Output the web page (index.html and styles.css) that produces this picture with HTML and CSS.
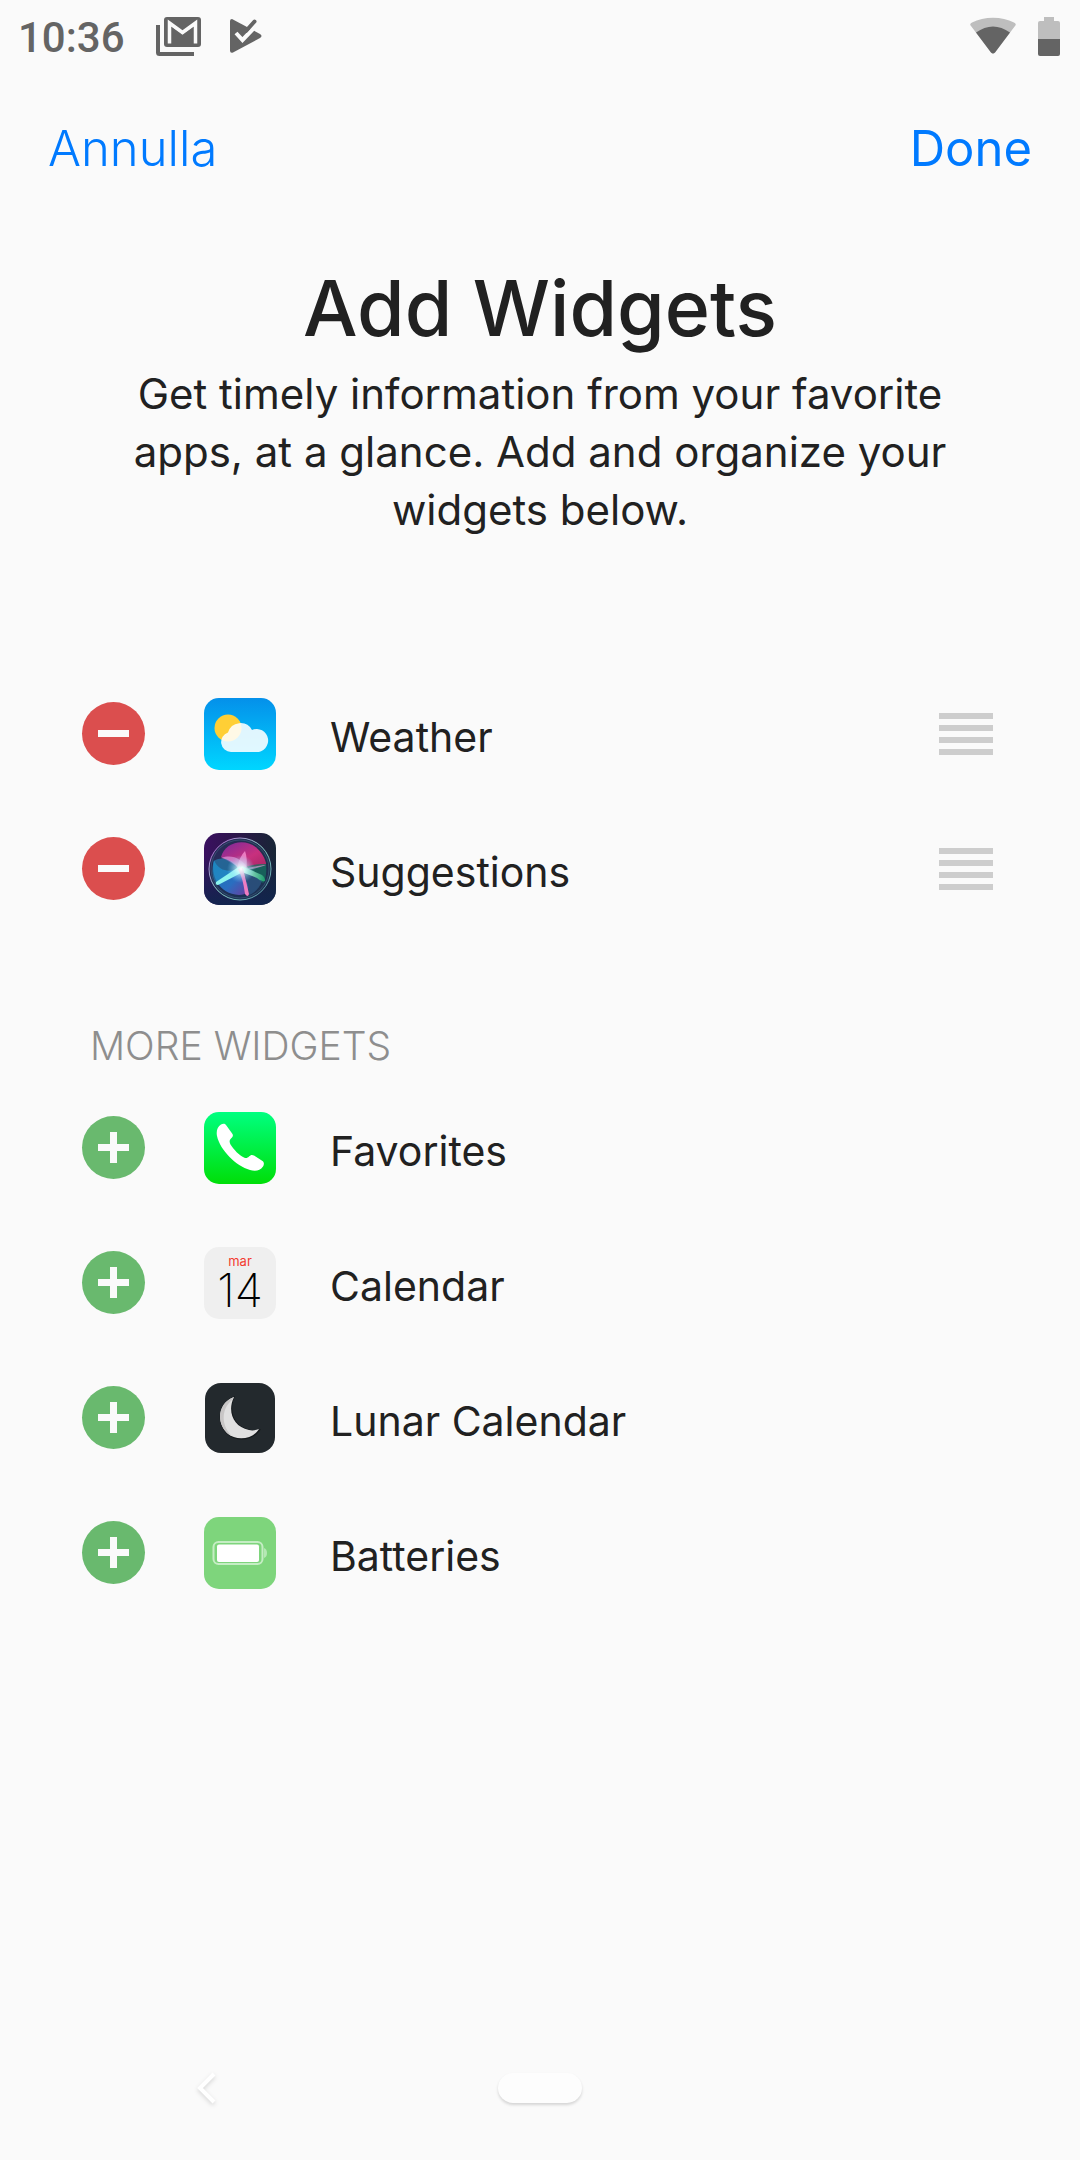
FILE: index.html
```html
<!DOCTYPE html>
<html lang="en">
<head>
  <meta charset="UTF-8">
  <meta name="viewport" content="width=device-width, initial-scale=1.0">
  <title>Add Widgets</title>
  <link rel="stylesheet" href="styles.css">
</head>
<body>

  <!-- Status bar -->
  <div class="status-bar">
    <span class="clock">10:36</span>
    <svg class="status-gmail" width="46" height="40" viewBox="0 0 46 40">
      <path d="M2 9v27.500a1.500 1.500 0 0 0 1.500 1.500H38" fill="none" stroke="#646464" stroke-width="4"/>
      <rect x="8" y="1" width="37" height="30" rx="3" fill="#646464"/>
      <path d="M13.500 27.500V7L26.500 16.500 39.500 7V27.500" fill="none" stroke="#fafafa" stroke-width="3.500"/>
      <path d="M12 5l14.500 10L41 5v3L26.500 18 12 8z" fill="#fafafa"/>
    </svg>
    <svg class="status-play" width="34" height="36" viewBox="0 0 34 36">
      <path d="M3 1L31 16q3 2 0 4L4 34.500q-3 1-3-2V3q0-2 2-2z" fill="#646464"/>
      <path d="M16 7l6-8 8 8-6 6z" fill="#fafafa"/>
      <path d="M7 15l6.500 7L24 11" fill="none" stroke="#fafafa" stroke-width="4"/>
      <path d="M17 13L25.500 3.500" fill="none" stroke="#646464" stroke-width="4" stroke-linecap="round"/>
    </svg>
    <svg class="status-wifi" width="46" height="38" viewBox="0 0 46 38">
      <path d="M1 9Q-1 7 2 5.500C14-1 32-1 44 5.500q3 1.500 1 3.500L25 35.500q-2 2-4 0z" fill="#bebebe"/>
      <path d="M6 15.500Q23 3.500 40 15.500L25 35.500q-2 2-4 0z" fill="#646464"/>
    </svg>
    <svg class="status-battery" width="22" height="40" viewBox="0 0 22 40">
      <path d="M6 1h10v4h4q2 0 2 2v16H0V7q0-2 2-2h4z" fill="#bebebe"/>
      <path d="M0 23h22v15q0 2-2 2H2q-2 0-2-2z" fill="#646464"/>
    </svg>
  </div>

  <!-- Cancel / confirm -->
  <header class="nav-bar">
    <button type="button" class="nav-button cancel">Annulla</button>
    <button type="button" class="nav-button done">Done</button>
  </header>

  <main>
    <div class="intro">
      <h1>Add Widgets</h1>
      <p>Get timely information from your favorite apps, at a glance. Add and organize your widgets below.</p>
    </div>

    <!-- Active widgets -->
    <ul class="widget-list">
      <li>
        <button type="button" class="toggle remove" aria-label="Remove Weather"></button>
        <svg class="app-icon" viewBox="0 0 72 72">
          <defs>
            <linearGradient id="sky" x1="0" y1="0" x2="0" y2="1">
              <stop offset="0" stop-color="#0490ea"/>
              <stop offset="1" stop-color="#00d6ff"/>
            </linearGradient>
          </defs>
          <rect width="72" height="72" rx="15" fill="url(#sky)"/>
          <circle cx="24" cy="30" r="13.500" fill="#ffcf35"/>
          <path d="M27 54a10 10 0 0 1-3-19.500A13 13 0 0 1 48 32a11.500 11.500 0 1 1 4 22z" fill="#fff" fill-opacity=".88"/>
        </svg>
        <span class="name">Weather</span>
        <button type="button" class="handle" aria-label="Reorder Weather"><i></i><i></i><i></i><i></i></button>
      </li>
      <li>
        <button type="button" class="toggle remove" aria-label="Remove Suggestions"></button>
        <svg class="app-icon" viewBox="0 0 72 72">
          <defs>
            <linearGradient id="night" x1="0" y1="0" x2="1" y2="0">
              <stop offset="0" stop-color="#3a1060"/>
              <stop offset=".5" stop-color="#2b1748"/>
              <stop offset="1" stop-color="#172636"/>
            </linearGradient>
            <linearGradient id="nightFade" x1="0" y1="0" x2="0" y2="1">
              <stop offset=".3" stop-color="#10254e" stop-opacity="0"/>
              <stop offset="1" stop-color="#10254e" stop-opacity=".95"/>
            </linearGradient>
            <linearGradient id="rim" x1="0" y1="0" x2="1" y2="1">
              <stop offset="0" stop-color="#b55bd0"/>
              <stop offset=".5" stop-color="#8fd0c8"/>
              <stop offset="1" stop-color="#4f8fa0"/>
            </linearGradient>
            <radialGradient id="glow">
              <stop offset="0" stop-color="#fff"/>
              <stop offset=".3" stop-color="#dff" stop-opacity=".7"/>
              <stop offset="1" stop-color="#7cf" stop-opacity="0"/>
            </radialGradient>
            <linearGradient id="pink" x1="0" y1="0" x2="1" y2="1">
              <stop offset="0" stop-color="#7a2a9c"/>
              <stop offset=".6" stop-color="#c8307e"/>
              <stop offset="1" stop-color="#a52663"/>
            </linearGradient>
            <linearGradient id="blue" x1="0" y1="0" x2="1" y2="1">
              <stop offset="0" stop-color="#1477b4"/>
              <stop offset=".6" stop-color="#2a6ec0"/>
              <stop offset="1" stop-color="#6d3a9e"/>
            </linearGradient>
            <linearGradient id="mint" x1="0" y1="0" x2="1" y2="0">
              <stop offset="0" stop-color="#d8fff8"/>
              <stop offset="1" stop-color="#1c9c6c"/>
            </linearGradient>
          </defs>
          <rect width="72" height="72" rx="15" fill="url(#night)"/>
          <rect width="72" height="72" rx="15" fill="url(#nightFade)"/>
          <circle cx="36" cy="36" r="31" fill="#223a5a" fill-opacity=".6" stroke="url(#rim)" stroke-width="1"/>
          <circle cx="36" cy="36" r="29" fill="none" stroke="#45708a" stroke-opacity=".5"/>
          <path d="M17 24C22 5 54 2 62 30c1 4-10 5-26 5z" fill="url(#pink)"/>
          <path d="M10 27c-4 15 5 34 25 35 8 0 10-5 9-10l-8-17C28 39 15 40 10 27z" fill="url(#blue)"/>
          <path d="M10 28c8-5 18-2 26 7L13 51c-5-4-6-15-3-23z" fill="#2593c8" fill-opacity=".55"/>
          <path d="M38 35c11-4 20-4 24-4 1 10-1 17-3 19z" fill="#15705e" fill-opacity=".75"/>
          <path d="M40 37l18 11c-2 7-8 12-13 14z" fill="#2f5d8e" fill-opacity=".65"/>
          <path d="M17 25c12-4 20 1 27 10 8-2 15-3 18-3-8 3-15 5-26 6-5-8-12-12-19-13z" fill="#e9b4f0" fill-opacity=".55"/>
          <path d="M33 36q2-12 8-18 3 8 1 19z" fill="#ff9ddc" fill-opacity=".7"/>
          <path d="M36 33L12 49q-1 3 2 3l25-13z" fill="#8ef5ef"/>
          <path d="M38 33l20 9q4 3 3 6-4 1-8-3L35 38z" fill="url(#mint)"/>
          <path d="M34 36l5-1 6 26q-1 4-4 0-2-16-7-25z" fill="#ef7cc1"/>
          <circle cx="37" cy="36" r="14" fill="url(#glow)"/>
        </svg>
        <span class="name">Suggestions</span>
        <button type="button" class="handle" aria-label="Reorder Suggestions"><i></i><i></i><i></i><i></i></button>
      </li>
    </ul>

    <!-- Widgets that can be added -->
    <h2>MORE WIDGETS</h2>
    <ul class="widget-list">
      <li>
        <button type="button" class="toggle add" aria-label="Add Favorites"></button>
        <svg class="app-icon" viewBox="0 0 72 72">
          <defs>
            <linearGradient id="green" x1="0" y1="0" x2="0" y2="1">
              <stop offset="0" stop-color="#00ff80"/>
              <stop offset="1" stop-color="#00de08"/>
            </linearGradient>
          </defs>
          <rect width="72" height="72" rx="15" fill="url(#green)"/>
          <path d="M17 12.500c2-1 4-1 5 .5l6.500 9c1 2 0 3-1.500 4.500-2 2-1.500 4-.5 6C30 38 35 43 40 45.500c2 1 3.500.5 5-1s3-2 5-1l8.500 5.500c2 1.500 1.500 4 .5 5.500-3 4.500-8 5-13 3.500C32 54 16 38 13 24c-1-5 .5-9.500 4-11.500z" fill="#fff"/>
        </svg>
        <span class="name">Favorites</span>
      </li>
      <li>
        <button type="button" class="toggle add" aria-label="Add Calendar"></button>
        <div class="app-icon calendar">
          <span class="month">mar</span>
          <span class="day">14</span>
        </div>
        <span class="name">Calendar</span>
      </li>
      <li>
        <button type="button" class="toggle add" aria-label="Add Lunar Calendar"></button>
        <svg class="app-icon" viewBox="0 0 72 72">
          <rect x="1" y="1" width="70" height="70" rx="16" fill="#23292d"/>
          <path d="M31 14C14 20 11 41 23 52c10 9 27 7 34-5-3 1-6 2-10 1-17-3-23-19-16-34z" fill="#15191c"/>
          <path d="M30 15C14 21 12 40 23 51c10 9 26 6 32-4-3 1-6 2-10 1C29 45 23 29 30 15z" fill="#e0e0e0"/>
          <path d="M30 15C14 21 12 40 23 51q2 2 5 3C18 45 16 28 28 18z" fill="#c8c6c6"/>
        </svg>
        <span class="name">Lunar Calendar</span>
      </li>
      <li>
        <button type="button" class="toggle add" aria-label="Add Batteries"></button>
        <svg class="app-icon" viewBox="0 0 72 72">
          <rect width="72" height="72" rx="15" fill="#7ed57c"/>
          <rect x="9.500" y="25" width="49" height="22" rx="5" fill="none" stroke="#c5edc4" stroke-width="2"/>
          <rect x="13" y="27.500" width="42" height="17.500" rx="2" fill="#fff"/>
          <path d="M60 31q3 1 3 5t-3 5z" fill="#b5e8b4"/>
        </svg>
        <span class="name">Batteries</span>
      </li>
    </ul>
  </main>

  <!-- System navigation -->
  <footer class="system-nav">
    <button type="button" class="back" aria-label="Back">
      <svg width="24" height="36" viewBox="0 0 24 36">
        <path d="M19 4L5 18l14 14" fill="none" stroke="#fff" stroke-width="4"/>
      </svg>
    </button>
    <button type="button" class="home" aria-label="Home"></button>
  </footer>

</body>
</html>
```
FILE: styles.css
```css
* {
  box-sizing: border-box;
}

body {
  margin: 0;
  min-height: 100vh;
  display: flex;
  flex-direction: column;
  background-color: #fafafa;
  color: #212121;
  font-family: Inter, "Liberation Sans", sans-serif;
}

button {
  padding: 0;
  border: 0;
  background: none;
  font-family: inherit;
}

svg {
  display: block;
}

/* Status bar */
.status-bar {
  display: flex;
  align-items: center;
  height: 72px;
  padding: 0 20px 0 18px;
}

.clock {
  padding-top: 2px;
  color: #646464;
  font-family: Roboto, sans-serif;
  font-size: 42px;
  font-weight: 500;
}

.status-gmail {
  margin-left: 31px;
}

.status-play {
  margin-left: 27px;
}

.status-wifi {
  margin-left: auto;
}

.status-battery {
  margin-left: 22px;
}

/* Cancel and done buttons */
.nav-bar {
  display: flex;
  justify-content: space-between;
  padding: 42px 48px 0;
}

.nav-button {
  color: #007aff;
  font-size: 49px;
  line-height: 70px;
}

.cancel {
  font-weight: 300;
}

.done {
  font-weight: 400;
}

/* Title and description */
.intro {
  padding: 71px 120px 0;
  text-align: center;
}

h1 {
  margin: 0 0 4px;
  font-size: 77px;
  font-weight: 500;
  line-height: 106px;
}

p {
  margin: 0 0 127px;
  font-size: 42px;
  line-height: 58px;
}

/* Widget rows */
.widget-list {
  margin: 0;
  padding: 0 87px 0 82px;
  list-style: none;
}

.widget-list li {
  display: flex;
  align-items: center;
  height: 135px;
}

.toggle {
  position: relative;
  width: 63px;
  height: 63px;
  border-radius: 50%;
}

.remove {
  background-color: #db4e4e;
}

.add {
  background-color: #69b96e;
}

/* Bars of the minus and plus signs */
.toggle::before,
.add::after {
  content: "";
  position: absolute;
  top: 28px;
  left: 16px;
  width: 31px;
  height: 7px;
  background-color: #fafafa;
}

.add::after {
  transform: rotate(90deg);
}

.app-icon {
  width: 72px;
  height: 72px;
  margin-left: 59px;
}

.calendar {
  display: flex;
  flex-direction: column;
  align-items: center;
  padding-top: 6px;
  border-radius: 15px;
  background-color: #efefef;
}

.month {
  color: #f33b30;
  font-size: 13px;
  line-height: 16px;
}

.day {
  color: #000;
  font-size: 46px;
  font-weight: 200;
  line-height: 42px;
}

.name {
  margin-left: 54px;
  padding-top: 6px;
  font-size: 41px;
  line-height: 56px;
}

.handle {
  display: flex;
  flex-direction: column;
  gap: 6px;
  width: 54px;
  margin-left: auto;
}

.handle i {
  height: 6px;
  background-color: #cdcdcd;
}

h2 {
  margin: 0;
  padding: 84px 90px 8px;
  color: #8e8e8e;
  font-size: 39px;
  font-weight: 300;
  line-height: 52px;
}

/* Back arrow and home pill */
.system-nav {
  display: grid;
  grid-template-columns: 1fr 84px 1fr;
  align-items: center;
  height: 144px;
  margin-top: auto;
}

.back {
  justify-self: center;
  margin-right: 84px;
  filter: drop-shadow(0 2px 2px rgba(0, 0, 0, 0.15));
}

.home {
  height: 30px;
  border-radius: 15px;
  background-color: #fdfdfd;
  box-shadow: 0 2px 3px rgba(0, 0, 0, 0.15);
}
```
